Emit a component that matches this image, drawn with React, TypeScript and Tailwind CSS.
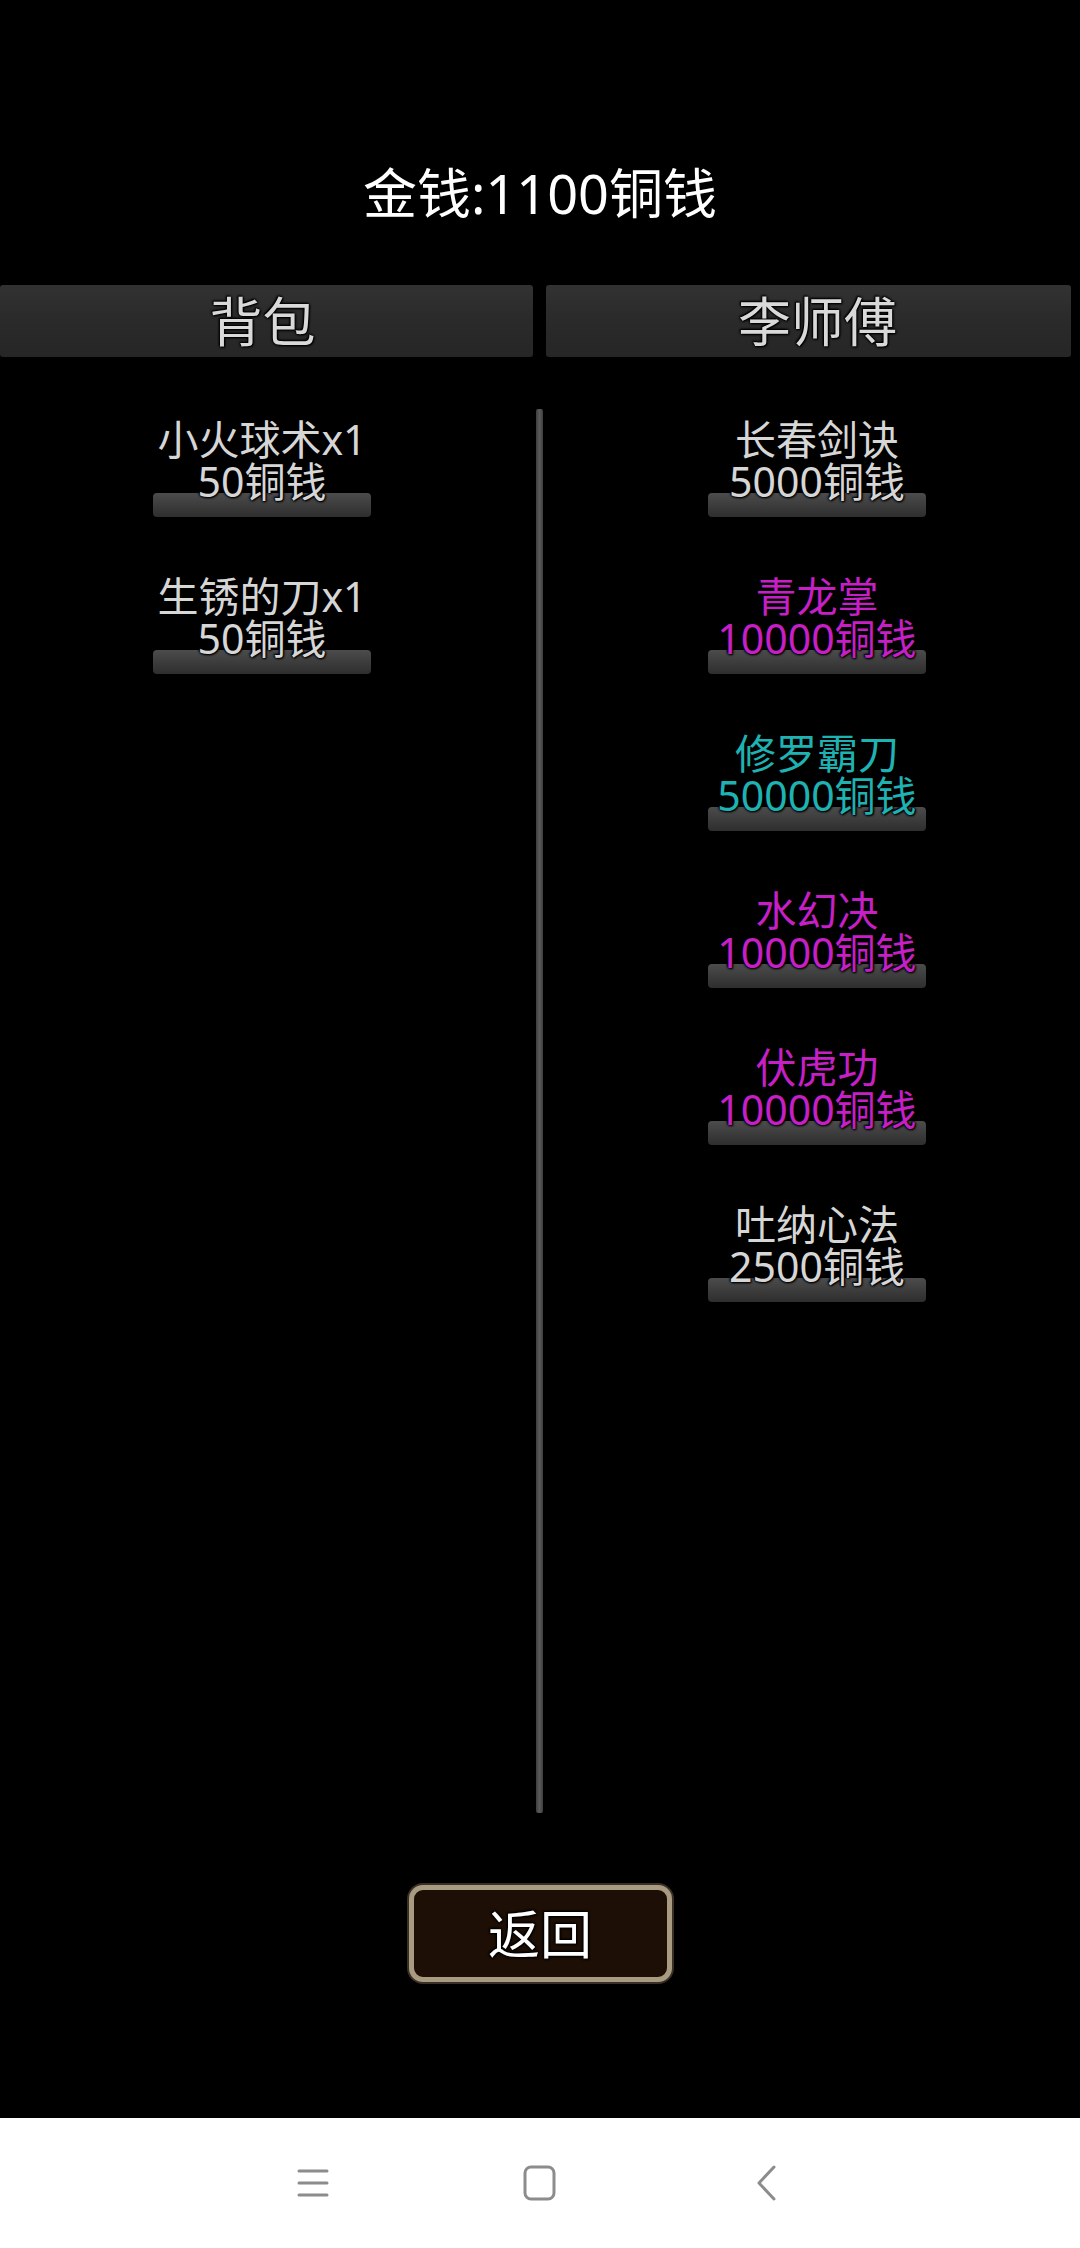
import React from "react";

type Skill = { name: string; price: string; color: string };

const bag: Skill[] = [
  { name: "小火球术x1", price: "50铜钱", color: "text-[#d6d6d6]" },
  { name: "生锈的刀x1", price: "50铜钱", color: "text-[#d6d6d6]" },
];

const master: Skill[] = [
  { name: "长春剑诀", price: "5000铜钱", color: "text-[#d6d6d6]" },
  { name: "青龙掌", price: "10000铜钱", color: "text-[#c61fc6]" },
  { name: "修罗霸刀", price: "50000铜钱", color: "text-[#1fb2b2]" },
  { name: "水幻决", price: "10000铜钱", color: "text-[#c61fc6]" },
  { name: "伏虎功", price: "10000铜钱", color: "text-[#c61fc6]" },
  { name: "吐纳心法", price: "2500铜钱", color: "text-[#d6d6d6]" },
];

const outline =
  "[text-shadow:0_0_2px_#000,0_0_3px_#000,1px_1px_2px_#000,-1px_-1px_2px_#000]";

function ShopItem({ item }: { item: Skill }) {
  return (
    <div className="flex flex-col items-center">
      <div
        className={`relative z-10 text-center text-[41px] leading-[42px] whitespace-nowrap ${item.color} ${outline}`}
      >
        {item.name}
        <br />
        {item.price}
      </div>
      <div className="-mt-[9px] h-[24px] w-[218px] rounded-[4px] bg-gradient-to-b from-[#4c4c4c] to-[#2e2e2e] shadow-[0_1px_2px_rgba(0,0,0,0.8)]" />
    </div>
  );
}

function Tab({ label, className }: { label: string; className: string }) {
  return (
    <div
      className={`${className} h-full rounded-[3px] bg-gradient-to-b from-[#323232] via-[#2a2a2a] to-[#262626] flex items-center justify-center text-[53px] leading-none text-[#d9d9d9] ${outline}`}
    >
      {label}
    </div>
  );
}

export default function App() {
  return (
    <div
      className="w-[1080px] h-[2248px] bg-black flex flex-col overflow-hidden"
      style={{ fontFamily: '"Noto Sans", "Noto Sans CJK SC", sans-serif' }}
    >
      {/* money */}
      <div className="h-[285px] pt-[162px] flex justify-center">
        <span className="text-[54px] leading-[62px] text-white">金钱:1100铜钱</span>
      </div>

      {/* tabs */}
      <div className="h-[72px] flex gap-[13px]">
        <Tab label="背包" className="w-[533px] pr-[8px]" />
        <Tab label="李师傅" className="w-[525px] pl-[18px]" />
      </div>

      {/* lists */}
      <div className="h-[1528px] flex">
        <div className="w-[524px] pt-[61px] flex flex-col items-center gap-[58px]">
          {bag.map((s) => (
            <ShopItem key={s.name} item={s} />
          ))}
        </div>
        <div className="ml-[12px] mt-[52px] w-[7px] h-[1404px] rounded-[2px] bg-gradient-to-r from-[#3e3e3e] via-[#5a5a5a] to-[#3e3e3e]" />
        <div className="w-[537px] pl-[11px] pt-[61px] flex flex-col items-center gap-[58px]">
          {master.map((s) => (
            <ShopItem key={s.name} item={s} />
          ))}
        </div>
      </div>

      {/* back button */}
      <div className="h-[97px] flex justify-center">
        <button className="w-[263px] h-[97px] rounded-[14px] border-[5px] border-[#a99b82] bg-[#1d0f05] shadow-[0_0_0_2px_#3a3025] flex items-center justify-center">
          <span className={`text-[52px] leading-none text-white ${outline}`}>返回</span>
        </button>
      </div>

      <div className="h-[136px]" />

      {/* system nav bar */}
      <div className="h-[130px] bg-white flex items-center justify-center">
        <div className="w-[227px] flex justify-center">
          <svg width="32" height="32" viewBox="0 0 32 32" fill="none" stroke="#8c8c8c" strokeWidth="3" strokeLinecap="round">
            <path d="M2 4h28M2 16h28M2 28h28" />
          </svg>
        </div>
        <div className="w-[227px] flex justify-center">
          <svg width="34" height="36" viewBox="0 0 34 36" fill="none" stroke="#8c8c8c" strokeWidth="3">
            <rect x="2" y="2" width="29" height="32" rx="6" />
          </svg>
        </div>
        <div className="w-[227px] flex justify-center">
          <svg width="22" height="36" viewBox="0 0 22 36" fill="none" stroke="#8c8c8c" strokeWidth="3" strokeLinecap="round" strokeLinejoin="round">
            <path d="M18 2L3 18l15 16" />
          </svg>
        </div>
      </div>
    </div>
  );
}
